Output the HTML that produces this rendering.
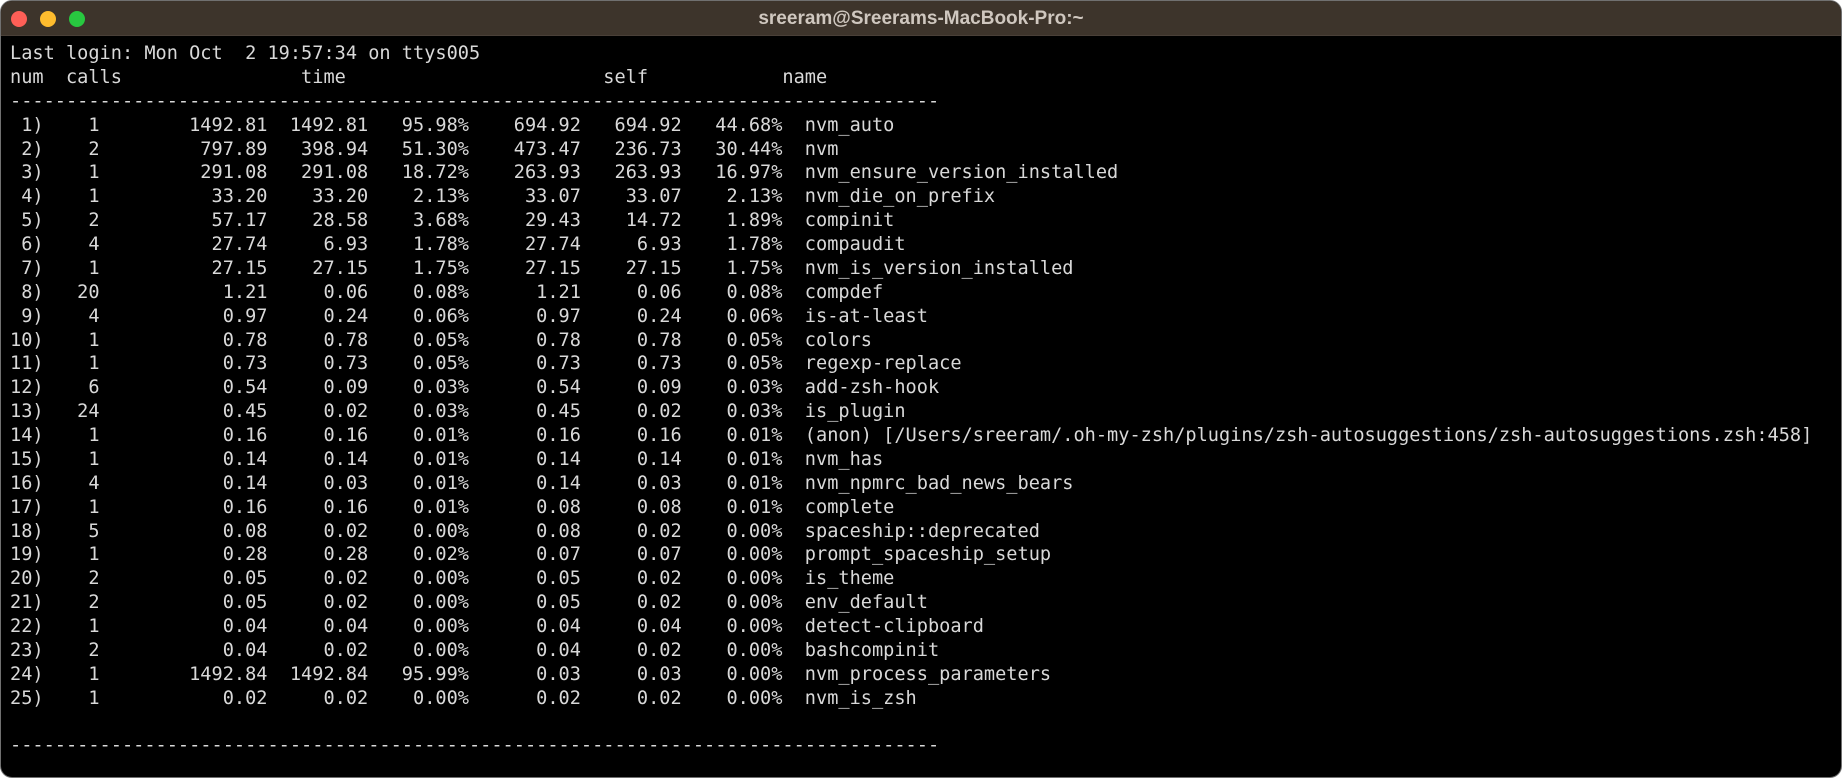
<!DOCTYPE html>
<html><head><meta charset="utf-8"><style>
html,body{margin:0;padding:0;background:#fff;width:1844px;height:780px;overflow:hidden}
.win{position:absolute;left:0;top:0;width:1840px;height:776px;border:1px solid #707070;border-radius:12px;background:#000;overflow:hidden}
.bar{position:absolute;left:0;top:0;right:0;height:34px;background:#3d342b;border-bottom:1px solid #4a4038}
.dot{position:absolute;top:10px;width:16px;height:16px;border-radius:50%}
.title{position:absolute;left:0;right:0;top:0;height:34px;text-align:center;color:#cfc7bf;font-family:"Liberation Sans",sans-serif;font-weight:bold;font-size:19px;line-height:35px}
pre{position:absolute;left:9px;top:41px;margin:0;font-family:"DejaVu Sans Mono","Liberation Mono",monospace;font-size:18.6px;line-height:23.87px;color:#d9d9d9}
</style></head><body>
<div class="win">
<div class="bar">
<div class="dot" style="left:10px;background:#fe5f57"></div>
<div class="dot" style="left:39px;background:#febc2e"></div>
<div class="dot" style="left:68px;background:#28c840"></div>
<div class="title">sreeram@Sreerams-MacBook-Pro:~</div>
</div>
<pre>Last login: Mon Oct  2 19:57:34 on ttys005
num  calls                time                       self            name
-----------------------------------------------------------------------------------
 1)    1        1492.81  1492.81   95.98%    694.92   694.92   44.68%  nvm_auto
 2)    2         797.89   398.94   51.30%    473.47   236.73   30.44%  nvm
 3)    1         291.08   291.08   18.72%    263.93   263.93   16.97%  nvm_ensure_version_installed
 4)    1          33.20    33.20    2.13%     33.07    33.07    2.13%  nvm_die_on_prefix
 5)    2          57.17    28.58    3.68%     29.43    14.72    1.89%  compinit
 6)    4          27.74     6.93    1.78%     27.74     6.93    1.78%  compaudit
 7)    1          27.15    27.15    1.75%     27.15    27.15    1.75%  nvm_is_version_installed
 8)   20           1.21     0.06    0.08%      1.21     0.06    0.08%  compdef
 9)    4           0.97     0.24    0.06%      0.97     0.24    0.06%  is-at-least
10)    1           0.78     0.78    0.05%      0.78     0.78    0.05%  colors
11)    1           0.73     0.73    0.05%      0.73     0.73    0.05%  regexp-replace
12)    6           0.54     0.09    0.03%      0.54     0.09    0.03%  add-zsh-hook
13)   24           0.45     0.02    0.03%      0.45     0.02    0.03%  is_plugin
14)    1           0.16     0.16    0.01%      0.16     0.16    0.01%  (anon) [/Users/sreeram/.oh-my-zsh/plugins/zsh-autosuggestions/zsh-autosuggestions.zsh:458]
15)    1           0.14     0.14    0.01%      0.14     0.14    0.01%  nvm_has
16)    4           0.14     0.03    0.01%      0.14     0.03    0.01%  nvm_npmrc_bad_news_bears
17)    1           0.16     0.16    0.01%      0.08     0.08    0.01%  complete
18)    5           0.08     0.02    0.00%      0.08     0.02    0.00%  spaceship::deprecated
19)    1           0.28     0.28    0.02%      0.07     0.07    0.00%  prompt_spaceship_setup
20)    2           0.05     0.02    0.00%      0.05     0.02    0.00%  is_theme
21)    2           0.05     0.02    0.00%      0.05     0.02    0.00%  env_default
22)    1           0.04     0.04    0.00%      0.04     0.04    0.00%  detect-clipboard
23)    2           0.04     0.02    0.00%      0.04     0.02    0.00%  bashcompinit
24)    1        1492.84  1492.84   95.99%      0.03     0.03    0.00%  nvm_process_parameters
25)    1           0.02     0.02    0.00%      0.02     0.02    0.00%  nvm_is_zsh

-----------------------------------------------------------------------------------</pre>
</div>
</body></html>
